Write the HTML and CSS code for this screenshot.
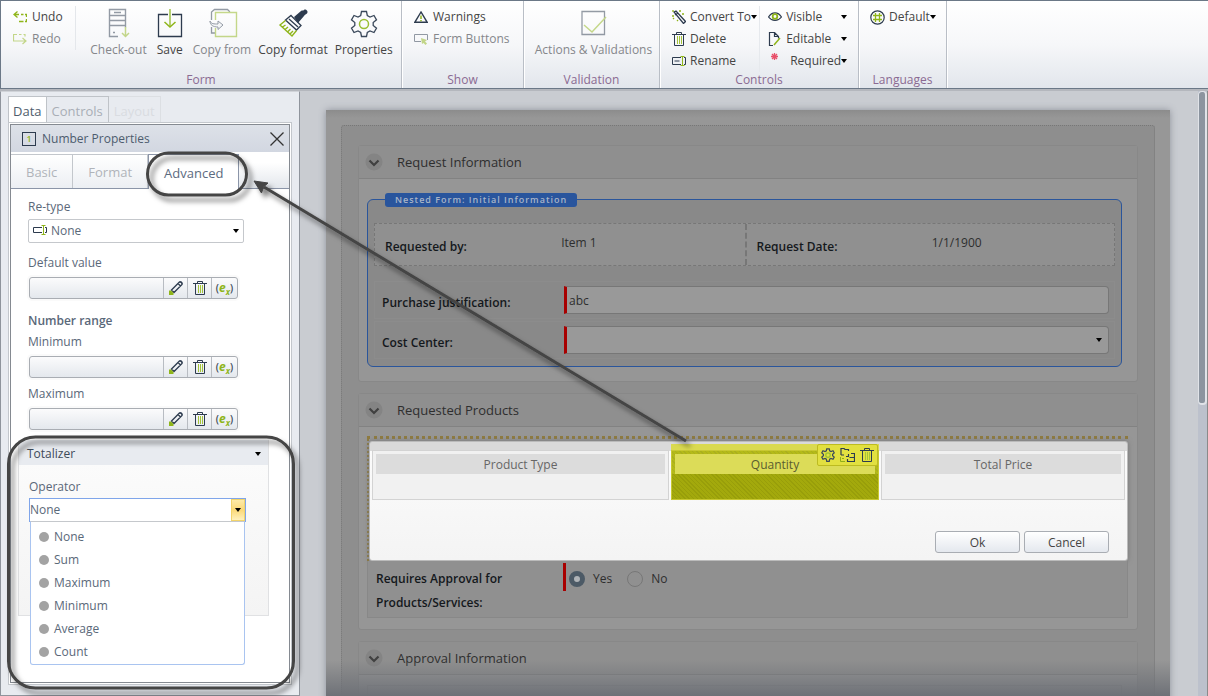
FILE: index.html
```html
<!DOCTYPE html>
<html lang="en">
<head>
<meta charset="utf-8">
<title>Form designer</title>
<link rel="stylesheet" href="styles.css">
</head>
<body>
<svg class="defs" aria-hidden="true">
  <symbol id="trash" viewBox="0 0 14 14"><path d="M0 2.500h14M4.500 2V.5h5V2M2.500 3v10.500h9V3" fill="none" stroke="#2d3b4e"/><path d="M5.500 4v8M7.500 4v8M9.500 4v8" stroke="#a4c43a"/></symbol>
  <symbol id="pencil" viewBox="0 0 14 14"><path d="m2.500 9 8-8h1.500L13 2v1.500L5 11.500zM9 2.500 11.500 5" fill="none" stroke="#2d3b4e" stroke-width="1.300"/><path d="m10.500.5 3 3V2l-1.500-1.500z" fill="#2d3b4e"/><path d="M0 14V9.500h2L4.500 12v2z" fill="#8fb51a"/></symbol>
  <symbol id="gear" viewBox="0 0 28 28"><path d="M11.500 1.500h5l.8 4 2.700 1.500 4-1.500 2.500 4.300-3.300 2.700v3l3.300 2.700-2.500 4.300-4-1.500-2.700 1.500-.8 4h-5l-.8-4L8 21l-4 1.500-2.500-4.300 3.300-2.700v-3L1.500 9.800 4 5.500 8 7l2.700-1.500z" fill="none" stroke="#3b495b" stroke-width="var(--w,1.300)"/><circle cx="14" cy="14" r="4.500" fill="none" stroke="#9abf33" stroke-width="var(--w,1.500)"/></symbol>
  <symbol id="rename" viewBox="0 0 14 11"><path d="M9 1.500H.5v7H9M12 1.500h1.500v7H12M2.500 5h5" fill="none" stroke="#2d3b4e"/><path d="M8.500.5h4M8.500 9.500h4M10.500.5v9" fill="none" stroke="#8fb51a"/></symbol>
  <symbol id="retype-icon" viewBox="0 0 14 11"><path d="M9 2.500H.5v5H9M12 2.500h1.500v5H12" fill="none" stroke="#2d3b4e"/><path d="M8.500.5h4M8.500 9.500h4M10.500.5v9" fill="none" stroke="#8fb51a"/></symbol>
  <symbol id="chev" viewBox="0 0 18 18"><circle cx="9" cy="9" r="8.500" fill="#848484"/><path d="m4.500 7.500 4.500 4.500 4.500-4.500" fill="none" stroke="#404040" stroke-width="2.200"/></symbol>
</svg>
<div class="app">
  <header class="ribbon">
    <section class="group g-form">
      <div class="tools">
        <div class="stack history">
          <button class="tool"><svg width="14" height="12" viewBox="0 0 14 12"><path d="M4.500.5 1 3.500l3.500 3M1 3.500h5M8 3.500h2.500M12 3.500h1.500V6M13.500 8v2.500H12M10.500 10.500H6" fill="none" stroke="#8fb51a" stroke-width="1.300"/></svg>Undo</button>
          <button class="tool" disabled><svg width="14" height="12" viewBox="0 0 14 12"><path d="M9.500 5 13 8l-3.500 3M13 8H.5V1.500H4M6 1.500h2.500M10.500 1.500h1.500v2" fill="none" stroke="#8fb51a" stroke-width="1.200"/></svg>Redo</button>
        </div>
        <div class="bigs">
          <button class="big" disabled><svg width="32" height="32" viewBox="0 0 32 32"><path d="M16 28.500H7.500V1.500h16v18M7.500 7.500h16M7.500 12.500h16M7.500 17.500h16M12 4.500h7M11 24.500h2" fill="none" stroke="#2d3b4e" stroke-width="1.400"/><path d="M23.500 19v9M20 25l3.500 3.500L27 25" fill="none" stroke="#8fb51a" stroke-width="1.500"/></svg>Check-out</button>
          <button class="big"><svg width="32" height="32" viewBox="0 0 32 32"><path d="M14 6.500H4.500v22h23v-22H18" fill="none" stroke="#2d3b4e" stroke-width="1.300"/><path d="M16 1v17" stroke="#a9c85a" stroke-width="1.700"/><path d="m10.500 14 5.500 5 5.500-5" fill="none" stroke="#8fb51a" stroke-width="1.500"/></svg>Save</button>
          <button class="big" disabled><svg width="32" height="32" viewBox="0 0 32 32"><path d="M5.500 12V4l3-2.500h13l2 2V5M5.500 19v6h4" fill="none" stroke="#2d3b4e" stroke-width="1.300"/><path d="M9.500 12V4.500h21v24h-21V20" fill="none" stroke="#8fb51a" stroke-width="1.400"/><path d="M4 13c1 3 4 3 8 3v-3l5 4-5 4.500V19c-5 0-8-2-8-6z" fill="#eef1f4" stroke="#2d3b4e"/></svg>Copy from</button>
          <button class="big"><svg width="32" height="32" viewBox="0 0 32 32"><path d="m17 9 7-6c1-1 2 0 3-1 1-1.500 5 1 3 3.500-1 1-2 1-3 2.500l-6 7z" fill="#2d3b4e"/><path d="m14 7.500 10 10-4.500 4.500-11-10zM12 11l9 8" fill="none" stroke="#2d3b4e" stroke-width="1.300"/><path d="M8.500 12.500 3 17l12 11 4.500-5.500M5.500 19l3-2M8 21.500l3-2.500M10.500 24l3-3M13 26l3-3" fill="none" stroke="#8fb51a" stroke-width="1.400"/></svg>Copy format</button>
          <button class="big"><svg width="28" height="32" viewBox="0 0 28 28"><use href="#gear"/></svg>Properties</button>
        </div>
      </div>
      <h2>Form</h2>
    </section>
    <section class="group g-show">
      <div class="tools stack">
        <button class="tool"><svg width="14" height="12" viewBox="0 0 14 12"><path d="M7 1 .8 11.300h12.400z" fill="none" stroke="#2d3b4e" stroke-width="1.400"/><path d="M7 4.500v3.500M7 9v1.300" stroke="#8fb51a" stroke-width="1.500"/></svg>Warnings</button>
        <button class="tool" disabled><svg width="14" height="12" viewBox="0 0 14 12"><path d="M7 8.500H.5v-7h13V7" fill="none" stroke="#2d3b4e"/><path d="m7 5 6 2-2 1.500 2 2-1.500 1.500-2-2L8 11z" fill="#8fb51a"/></svg>Form Buttons</button>
      </div>
      <h2>Show</h2>
    </section>
    <section class="group g-valid">
      <div class="tools bigs">
        <button class="big" disabled><svg width="32" height="32" viewBox="0 0 32 32"><path d="M5 3.500h22.500v23H5z" fill="none" stroke="#2d3b4e" stroke-width="1.300"/><path d="m7 17 8 7L29 9" fill="none" stroke="#8fb51a" stroke-width="1.500"/></svg>Actions &amp; Validations</button>
      </div>
      <h2>Validation</h2>
    </section>
    <section class="group g-controls">
      <div class="tools">
        <div class="stack first">
          <button class="tool"><svg width="14" height="14" viewBox="0 0 14 14"><path d="m2 2 2-1 9.500 10.500-2 2zM3 5l3-2" fill="none" stroke="#2d3b4e" stroke-width="1.300"/><path d="M1 0v2M0 6h2M7 1h2M10 4h2M5 10l1 1M1 9l1-1" stroke="#8fb51a" stroke-width="1.300"/></svg>Convert To<i class="caret"></i></button>
          <button class="tool"><svg width="14" height="14"><use href="#trash"/></svg>Delete</button>
          <button class="tool"><svg width="14" height="11"><use href="#rename"/></svg>Rename</button>
        </div>
        <div class="stack second">
          <button class="tool"><svg width="14" height="12" viewBox="0 0 14 12"><path d="M.5 6C4 .5 10 .5 13.500 6 10 10.500 4 10.500.5 6z" fill="none" stroke="#2d3b4e" stroke-width="1.200"/><circle cx="7" cy="5.500" r="2.300" fill="none" stroke="#8fb51a" stroke-width="1.800"/></svg>Visible<i class="caret"></i></button>
          <button class="tool"><svg width="14" height="14" viewBox="0 0 14 14"><path d="M5 13.500H1.500V.5h5l4 4v2M6.500.5v4h4" fill="none" stroke="#2d3b4e" stroke-width="1.200"/><path d="m6 13 6-7" stroke="#8fb51a" stroke-width="1.500"/></svg>Editable<i class="caret"></i></button>
          <button class="tool"><svg width="14" height="18" viewBox="0 0 14 18"><path d="M6.500 1v7M3 4.500h7M4 2l5 5M9 2 4 7" stroke="#e8506a" stroke-width="1.300"/></svg>Required<i class="caret"></i></button>
        </div>
      </div>
      <h2>Controls</h2>
    </section>
    <section class="group g-lang">
      <div class="tools stack">
        <button class="tool"><svg width="15" height="15" viewBox="0 0 15 15"><circle cx="7.500" cy="7.500" r="6.700" fill="none" stroke="#2d3b4e" stroke-width="1.200"/><path d="M5.500 3v9M9.500 3v9M3 5.500h9M3 9.500h9" fill="none" stroke="#8fb51a" stroke-width="1.300"/></svg>Default<i class="caret"></i></button>
      </div>
      <h2>Languages</h2>
    </section>
  </header>

  <div class="work">
    <aside class="side">
      <nav class="tabs">
        <button class="tab on">Data</button><button class="tab">Controls</button><button class="tab faint">Layout</button>
      </nav>
      <div class="dock">
        <section class="props">
          <header class="props-head">
            <span class="num">1</span><h1>Number Properties</h1>
            <button class="close" aria-label="Close"><svg width="14" height="14" viewBox="0 0 14 14"><path d="m.5.5 13 13m0-13-13 13" stroke="#333" stroke-width="1.300"/></svg></button>
          </header>
          <nav class="subtabs">
            <button>Basic</button><button>Format</button><button class="on">Advanced</button>
          </nav>
          <div class="fields">
            <label for="retype">Re-type</label>
            <div class="pick retype"><svg width="14" height="11"><use href="#retype-icon"/></svg><select id="retype"><option>None</option></select><i class="caret"></i></div>
            <label for="defv">Default value</label>
            <div class="combo"><input id="defv" type="text"><button aria-label="Edit"><svg width="14" height="14"><use href="#pencil"/></svg></button><button aria-label="Delete"><svg width="14" height="14"><use href="#trash"/></svg></button><button aria-label="Expression">(<em>e<sub>x</sub></em>)</button></div>
            <h3>Number range</h3>
            <label for="minv">Minimum</label>
            <div class="combo near"><input id="minv" type="text"><button aria-label="Edit"><svg width="14" height="14"><use href="#pencil"/></svg></button><button aria-label="Delete"><svg width="14" height="14"><use href="#trash"/></svg></button><button aria-label="Expression">(<em>e<sub>x</sub></em>)</button></div>
            <label for="maxv">Maximum</label>
            <div class="combo near"><input id="maxv" type="text"><button aria-label="Edit"><svg width="14" height="14"><use href="#pencil"/></svg></button><button aria-label="Delete"><svg width="14" height="14"><use href="#trash"/></svg></button><button aria-label="Expression">(<em>e<sub>x</sub></em>)</button></div>
          </div>
          <section class="total">
            <h3>Totalizer<i class="caret"></i></h3>
            <div class="total-body">
              <label for="oper">Operator</label>
              <div class="pick oper"><select id="oper"><option>None</option></select><span class="drop"><i class="caret"></i></span>
                <ul class="menu">
                  <li>None</li><li>Sum</li><li>Maximum</li><li>Minimum</li><li>Average</li><li>Count</li>
                </ul>
              </div>
            </div>
          </section>
        </section>
      </div>
    </aside>

    <main class="canvas">
      <div class="sheet">
        <div class="frame">
          <section class="card">
            <h2><svg width="18" height="18"><use href="#chev"/></svg>Request Information</h2>
            <div class="card-body">
              <div class="nested">
                <span class="badge">Nested Form: Initial Information</span>
                <div class="pair">
                  <div class="cell"><b>Requested by:</b><span>Item 1</span></div>
                  <div class="cell"><b>Request Date:</b><span>1/1/1900</span></div>
                </div>
                <div class="row"><label for="just">Purchase justification:</label><input id="just" type="text" value="abc"></div>
                <div class="row"><label for="cost">Cost Center:</label><div class="cost"><select id="cost"><option></option></select><i class="caret"></i></div></div>
              </div>
            </div>
          </section>
          <section class="card products">
            <h2><svg width="18" height="18"><use href="#chev"/></svg>Requested Products</h2>
            <div class="card-body">
              <div class="dotted">
                <div class="lit">
                  <table>
                    <thead><tr><th><div>Product Type</div></th><th class="hot"><div>Quantity</div>
                      <span class="mini"><button aria-label="Settings"><svg class="g" width="14" height="14" viewBox="0 0 28 28"><use href="#gear"/></svg></button><button aria-label="Change"><svg width="15" height="14" viewBox="0 0 15 14"><path d="M1 7V.5h3l1 1h3.500V3M1 7h3M6 8.500h2.500V6M11 5.500h3.500v8h-7V11M9.500 9.500h5" fill="none" stroke="#2d3b4e" stroke-width="1.200"/><path d="M.5 9v4.500H5M2 10.500h2" fill="none" stroke="#8fae1a"/></svg></button><button aria-label="Delete column"><svg width="14" height="14"><use href="#trash"/></svg></button></span></th><th><div>Total Price</div></th></tr></thead>
                    <tbody><tr><td></td><td class="hot"></td><td></td></tr></tbody>
                  </table>
                  <div class="actions"><button>Ok</button><button>Cancel</button></div>
                </div>
              </div>
              <div class="approve" role="radiogroup" aria-labelledby="apq">
                <b id="apq">Requires Approval for Products/Services:</b>
                <div class="radios"><label><input type="radio" name="ap" checked>Yes</label><label><input type="radio" name="ap">No</label></div>
              </div>
            </div>
          </section>
          <section class="card">
            <h2><svg width="18" height="18"><use href="#chev"/></svg>Approval Information</h2>
            <div class="card-body"><div class="empty"></div></div>
          </section>
        </div>
      </div>
      <div class="fade"></div>
      <div class="scroll"><div class="thumb"></div></div>
    </main>
  </div>
  <svg class="notes" width="740" height="696" viewBox="0 0 740 696" aria-hidden="true">
    <defs><filter id="sh" x="-10%" y="-20%" width="130%" height="150%"><feDropShadow dx="4" dy="5" stdDeviation="2.500" flood-color="#000" flood-opacity=".5"/></filter></defs>
    <g filter="url(#sh)" fill="none" stroke="#444" stroke-width="3">
      <rect x="147.500" y="153" width="99" height="42" rx="21"/>
      <rect x="8.500" y="437" width="285" height="251" rx="27"/>
      <path d="M686 441 264 187"/>
      <path d="m254 181 14 2-4.500 4-2 6z" fill="#444" stroke-width="1"/>
    </g>
  </svg>
</div>
</body>
</html>
```
FILE: styles.css
```css
* { box-sizing: border-box; }
body { margin: 0; font: 12px/16px "Open Sans", "Noto Sans", sans-serif; color: #444; }
h1, h2, h3, ul { margin: 0; padding: 0; font-size: inherit; font-weight: 400; list-style: none; }
button, input, select { font: inherit; color: inherit; margin: 0; padding: 0; border: 0; background: none; appearance: none; outline: 0; }
svg { display: block; flex: none; }
.defs { position: absolute; width: 0; height: 0; }
.caret { flex: none; border: 3px solid transparent; border-top: 4px solid #000; border-bottom: 0; }

.app { position: relative; height: 100vh; display: flex; flex-direction: column; overflow: hidden; }

.ribbon { flex: none; height: 89px; display: flex; border: 1px solid #6b7887; border-width: 1px 0 1px 1px; background: linear-gradient(#fff, #f6f7f9 50%, #e2e6ec); }
.group { display: flex; flex-direction: column; border-right: 1px solid #b9bec6; box-shadow: 1px 0 #fff; }
.tools { flex: 1; display: flex; padding-top: 5px; }
.group h2 { text-align: center; color: #8b6a92; line-height: 16px; }
.stack { display: flex; flex-direction: column; justify-content: flex-start; }
.tool { display: flex; align-items: center; gap: 5px; height: 22px; text-align: left; white-space: nowrap; }
.tool .caret { margin-left: -4px; }
.big { display: flex; flex-direction: column; align-items: center; gap: 2px; padding-top: 2px; line-height: 16px; white-space: nowrap; }
.bigs { display: flex; align-items: flex-start; justify-content: center; }
button:disabled { color: #85878b; }
button:disabled svg { opacity: .5; }
.g-form { width: 401px; }
.g-form .bigs { flex: 1; gap: 7px; padding-left: 6px; }
.history { width: 75px; height: 44px; padding-left: 12px; border-right: 1px solid #e4e7eb; }
.history.stack { padding-top: 0; }
.g-show { width: 122px; }
.g-show .stack { padding-left: 12px; }
.g-valid { width: 136px; }
.g-valid .bigs { padding-left: 4px; }
.g-controls { width: 199px; }
.first { width: 105px; padding-left: 12px; border-right: 1px solid #e6e9ed; }
.first .tool { gap: 4px; }
.second { flex: 1; padding: 0 11px 0 8px; }
.second .tool { gap: 4px; }
.second .tool:last-child { gap: 8px; }
.second .tool .caret { margin-left: auto; }
.second .tool:last-child .caret { margin-left: -8px; }
.g-lang { width: 88px; }
.g-lang .stack { padding-left: 11px; }
.g-lang .tool { gap: 4px; }

.work { flex: 1; min-height: 0; display: flex; border-top: 2px solid #b4b7bd; }
.side { flex: none; width: 300px; padding: 4px 7px 10px 7px; border: 1px solid #8f949c; border-top-color: #d0d3d8; background: #e8ebf0; display: flex; flex-direction: column; color: #5a6879; }
.tabs { display: flex; height: 26px; }
.tab { border: 1px solid #bfc3c8; border-bottom: 0; padding: 2px 4px 0; font-size: 13px; color: #a9aeb6; border-left-width: 0; }
.tab.on { background: #fff; color: #4f5d6c; border-left-width: 1px; }
.tab:not(.on) { padding: 2px 5px 0; }
.tab.faint { border-color: #dcdfe3; color: #d9dce1; }
.dock { flex: 1; min-height: 0; padding: 1px; border: 1px solid #c3c7cc; background: #fff; display: flex; }
.props { flex: 1; min-width: 0; border: 1px solid #858a91; background: #fff; }
.props-head { display: flex; align-items: center; gap: 6px; height: 27px; padding: 0 5px 0 11px; background: linear-gradient(#dde1e8, #d2d7e1); color: #4d5c6e; }
.props-head h1 { flex: 1; }
.num { width: 14px; height: 14px; border: 1px solid #2d3b4e; color: #8fb51a; font-size: 9px; line-height: 12px; text-align: center; font-weight: 600; }
.subtabs { display: flex; height: 37px; padding-top: 2px; border-bottom: 1px solid #8b95a8; background: linear-gradient(#fff 30%, #e3e7ec); }
.subtabs button { border: 1px solid #c3c7cc; border-left: 0; border-bottom: 0; padding: 0 15px; font-size: 13px; color: #b0b4ba; background: linear-gradient(#fff, #eceff3); }
.subtabs button.on { margin-bottom: -1px; padding: 2px 15px 0; background: #fff; color: #5c6b80; border-color: #8b95a8; border-left: 1px solid #8b95a8; }
.fields { display: flex; flex-direction: column; padding: 10px 17px 0; }
.fields label { margin-bottom: 4px; }
.fields h3 { font-weight: 600; padding-bottom: 5px; }
.pick { position: relative; display: flex; align-items: center; }
.pick select { flex: 1; }
.retype { width: 216px; height: 24px; padding: 0 4px 1px; gap: 4px; border: 1px solid #c5c8cc; border-radius: 2px; margin-bottom: 12px; }
.combo { display: flex; width: 209px; height: 22px; margin: 2px 0 14px 1px; border: 1px solid #a9adb3; border-radius: 3px; background: linear-gradient(#fbfbfc, #e4e8ed); box-shadow: 0 0 0 2px #fafafa; }
.combo.near { margin-bottom: 8px; }
.combo input { flex: 1; min-width: 0; }
.combo button { width: 24px; display: flex; align-items: center; justify-content: center; border-left: 1px solid #b8bcc2; font-size: 10px; font-weight: 600; color: #3c4a5a; }
.combo button:last-child { width: 26px; }
.combo em { color: #8fb51a; font-size: 12px; font-weight: 700; line-height: 16px; }
.combo sub { font-size: 8px; line-height: 1px; }
.total { margin: 2px 20px 0 7px; border: 1px solid #e0e1e3; border-top: 0; background: linear-gradient(#fcfcfc, #f4f4f4); height: 176px; }
.total h3 { display: flex; align-items: center; justify-content: space-between; height: 25px; padding: 2px 7px 0 8px; background: #e8ebf0; color: #3d4a59; }
.total-body { padding: 14px 23px 0 10px; }
.oper { width: 217px; height: 24px; margin-top: 3px; border: 1px solid #7fa5ea; background: #fff; }
.oper select { height: 22px; }
.drop { display: flex; align-items: center; justify-content: center; width: 14px; height: 22px; border: 1px solid #f3d46a; background: linear-gradient(#fdeaa8, #fbd978 50%, #fff1bd); }
.menu { position: absolute; top: 22px; left: 0; right: 0; padding: 3px 0 1px 8px; border: 1px solid #a9c4f0; border-top-color: #c5c8cc; border-radius: 0 0 3px 3px; background: #fff; }
.menu li { display: flex; align-items: center; gap: 5px; height: 23px; }
.menu li::before { content: ""; width: 10px; height: 10px; border-radius: 50%; background: #a3a3a3; }

.canvas { position: relative; flex: 1; min-width: 0; padding: 19px 38px 0 26px; background: #c9ccd1; overflow: hidden; }
.sheet { padding: 15px 15px 0; background: linear-gradient(#8c8c8c, #979797 8px); box-shadow: 0 0 7px #8e929b; }
.frame { padding: 19px 16px 0; border: 1px dotted #777; border-radius: 3px; background: #8e8e8e; display: flex; flex-direction: column; gap: 11px; height: 700px; }
.card { border: 1px solid #888; border-radius: 3px; background: #969696; color: #2e2e2e; }
.card > h2 { display: flex; align-items: center; gap: 14px; height: 33px; padding-left: 6px; border-bottom: 1px solid #828282; background: #8f8f8f; font-size: 13px; }
.card-body { padding: 20px 15px 14px 8px; }
.card b, .row label { font-weight: 600; color: #14181c; }
.nested { position: relative; padding: 23px 6px 5px; border: 1px solid #2a559b; border-radius: 6px; background: #898989; }
.badge { position: absolute; left: 17px; top: -7px; padding: 0 10px; border-radius: 3px; background: #29559d; color: #a8b4c8; font-size: 9px; line-height: 14px; font-weight: 600; letter-spacing: 1px; }
.pair { display: grid; grid-template-columns: 1fr 1fr; height: 43px; border: 1px dashed #777; background: #909090; margin-bottom: 15px; }
.cell { display: grid; grid-template-columns: 49% 1fr; padding-left: 10px; align-items: start; }
.cell + .cell { border-left: 2px dashed #777; }
.cell b { padding-top: 15px; }
.cell span { padding-top: 11px; }
.row { display: grid; grid-template-columns: 182px 1fr; align-items: center; height: 38px; padding: 0 5px 0 7px; margin-bottom: 2px; border: 1px solid #8c8c8c; }
.row input, .cost { height: 28px; border: 1px solid #777; border-left: 3px solid #a80000; border-radius: 0 4px 4px 0; background: #999; padding: 0 2px; min-width: 0; }
.row label { padding-top: 5px; }
.cost { display: flex; align-items: center; padding-right: 6px; }
.cost select { flex: 1; }
.products .card-body { padding: 9px 9px 11px 8px; }
.dotted { border: 3px dotted #8e7a3e; border-width: 3px 0 0 2px; }
.lit { margin-top: 2px; border-radius: 3px; background: linear-gradient(#dadada 9px, #fbfbfb 9px, #f4f4f4); border: 1px solid #bbb; height: 120px; box-shadow: 0 0 5px #777; }
.lit table { width: 100%; table-layout: fixed; border-collapse: separate; border-spacing: 2px 0; padding-top: 8px; color: #666; }
.lit th:nth-child(1) { width: 297px; }
.lit th:nth-child(2) { width: 208px; }
.lit th { font-weight: 400; padding: 3px 3px 0; height: 24px; border: 1px solid #d3d3d3; border-bottom: 0; background: #f1f1f1; }
.lit th div { height: 20px; line-height: 21px; background: #dcdcdc; }
.lit td { height: 26px; padding: 0; border: 1px solid #d3d3d3; border-top: 0; background: #f1f1f1; }
.lit th.hot, .lit td.hot { position: relative; border-color: #c8c832; background: repeating-linear-gradient(45deg, #aaaf1f 0 1px, #b4ba18 1px 3px); }
.lit td.hot { background: repeating-linear-gradient(45deg, #989e0a 0 1px, #a3a90c 1px 3px); }
.lit th.hot { box-shadow: 0 -6px #dada50; color: #5a5c30; }
.lit th.hot div { background: #dcdc58; }
.mini { position: absolute; right: 0; top: -7px; display: flex; align-items: center; gap: 5px; height: 22px; padding: 0 3px; background: #e2e040; border: 1px solid #bdbb20; border-radius: 2px; }
.mini .g { --w: 2.500; }
.actions { display: flex; justify-content: flex-end; gap: 4px; padding: 31px 18px 0; }
.actions button { width: 85px; height: 22px; border: 1px solid #a9adb3; border-radius: 3px; background: linear-gradient(#fff, #e4e8ee); color: #444; line-height: 22px; }
.approve { display: grid; grid-template-columns: 187px 1fr; align-items: start; height: 57px; padding: 2px 0 0 8px; border: 1px solid #888; border-top: 0; background: #909090; }
.approve b { line-height: 24px; padding: 4px 40px 0 0; }
.radios { height: 28px; border-left: 3px solid #a80000; padding-left: 3px; display: flex; align-items: center; gap: 15px; }
.radios label { display: flex; align-items: center; gap: 8px; padding-top: 4px; }
.radios input { width: 16px; height: 16px; border: 1px solid #777; border-radius: 50%; }
.radios input:checked { border: 5px solid #4c5a66; background: #b0b4b8; }
.empty { height: 80px; border: 1px solid #8a8a8a; }
.products + .card .card-body { padding-top: 10px; }
.fade { position: absolute; left: 26px; right: 38px; bottom: 0; height: 36px; background: linear-gradient(transparent, #6e7177); }
.scroll { position: absolute; right: 0; top: 0; bottom: 0; width: 10px; background: #bcc1cc; border-right: 1px solid #8a8a8a; }
.thumb { width: 9px; height: 314px; border: 1px solid #e0e3e8; border-width: 1px 2px 2px 1px; border-radius: 4px; background: #8b949f; }
.notes { position: absolute; left: 0; top: 0; pointer-events: none; }
```
